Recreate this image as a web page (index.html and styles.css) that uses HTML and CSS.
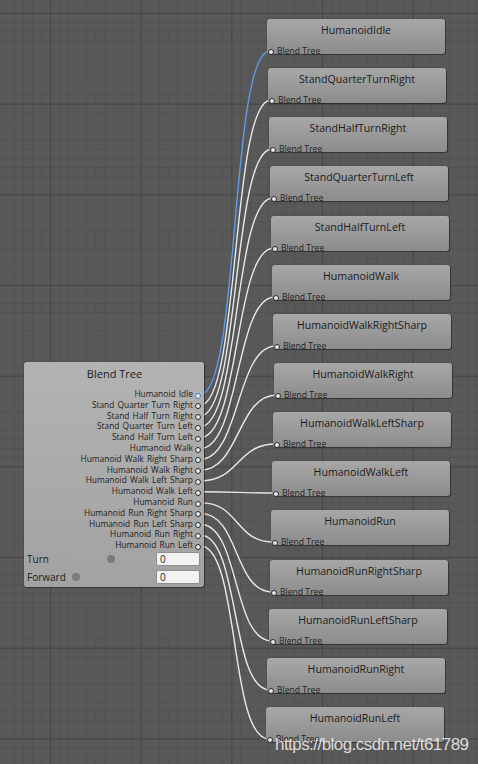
FILE: index.html
```html
<!DOCTYPE html>
<html lang="en">
<head>
<meta charset="utf-8">
<title>Blend Tree</title>
<link rel="stylesheet" href="styles.css">
</head>
<body>
<div class="canvas">
  <svg class="edges" width="478" height="764" viewBox="0 0 478 764">
    <g fill="none" stroke-width="1.4">
      <path class="edge" d="M200 545.8 C240 545.8 229 739 269 739"/>
      <path class="edge" d="M200 535.0 C240 535.0 230 690 270 690"/>
      <path class="edge" d="M200 524.2 C240 524.2 232 641 272 641"/>
      <path class="edge" d="M200 513.4 C240 513.4 233 592 273 592"/>
      <path class="edge" d="M200 502.6 C240 502.6 234 542 274 542"/>
      <path class="edge" d="M200 491.8 C240 491.8 235 493 275 493"/>
      <path class="edge" d="M200 481.0 C240 481.0 236 444 276 444"/>
      <path class="edge" d="M200 470.2 C240 470.2 237 395 277 395"/>
      <path class="edge" d="M200 459.4 C240 459.4 236 346 276 346"/>
      <path class="edge" d="M200 448.6 C240 448.6 235 297 275 297"/>
      <path class="edge" d="M200 437.7 C240 437.7 234 248 274 248"/>
      <path class="edge" d="M200 426.9 C240 426.9 233 198 273 198"/>
      <path class="edge" d="M200 416.1 C240 416.1 232 149 272 149"/>
      <path class="edge" d="M200 405.3 C240 405.3 231 100 271 100"/>
      <path class="edge active" d="M200 394.5 C240 394.5 230 51 270 51"/>
    </g>
  </svg>

  <div class="node blend">
    <div class="blend-title">Blend Tree</div>
    <ul class="outputs">
      <li class="active">Humanoid Idle</li>
      <li>Stand Quarter Turn Right</li>
      <li>Stand Half Turn Right</li>
      <li>Stand Quarter Turn Left</li>
      <li>Stand Half Turn Left</li>
      <li>Humanoid Walk</li>
      <li>Humanoid Walk Right Sharp</li>
      <li>Humanoid Walk Right</li>
      <li>Humanoid Walk Left Sharp</li>
      <li>Humanoid Walk Left</li>
      <li>Humanoid Run</li>
      <li>Humanoid Run Right Sharp</li>
      <li>Humanoid Run Left Sharp</li>
      <li>Humanoid Run Right</li>
      <li>Humanoid Run Left</li>
    </ul>
    <div class="param">
      <span class="param-name">Turn</span>
      <span class="slider"><span class="knob"></span></span>
      <span class="field">0</span>
    </div>
    <div class="param">
      <span class="param-name">Forward</span>
      <span class="slider short"><span class="knob start"></span></span>
      <span class="field">0</span>
    </div>
  </div>

  <div class="node clip" style="left:267px;top:19px"><div class="clip-title">HumanoidIdle</div><div class="clip-input">Blend Tree</div></div>
  <div class="node clip" style="left:268px;top:68px"><div class="clip-title">StandQuarterTurnRight</div><div class="clip-input">Blend Tree</div></div>
  <div class="node clip" style="left:269px;top:117px"><div class="clip-title">StandHalfTurnRight</div><div class="clip-input">Blend Tree</div></div>
  <div class="node clip" style="left:270px;top:166px"><div class="clip-title">StandQuarterTurnLeft</div><div class="clip-input">Blend Tree</div></div>
  <div class="node clip" style="left:271px;top:216px"><div class="clip-title">StandHalfTurnLeft</div><div class="clip-input">Blend Tree</div></div>
  <div class="node clip" style="left:272px;top:265px"><div class="clip-title">HumanoidWalk</div><div class="clip-input">Blend Tree</div></div>
  <div class="node clip" style="left:273px;top:314px"><div class="clip-title">HumanoidWalkRightSharp</div><div class="clip-input">Blend Tree</div></div>
  <div class="node clip" style="left:274px;top:363px"><div class="clip-title">HumanoidWalkRight</div><div class="clip-input">Blend Tree</div></div>
  <div class="node clip" style="left:273px;top:412px"><div class="clip-title">HumanoidWalkLeftSharp</div><div class="clip-input">Blend Tree</div></div>
  <div class="node clip" style="left:272px;top:461px"><div class="clip-title">HumanoidWalkLeft</div><div class="clip-input">Blend Tree</div></div>
  <div class="node clip" style="left:271px;top:510px"><div class="clip-title">HumanoidRun</div><div class="clip-input">Blend Tree</div></div>
  <div class="node clip" style="left:270px;top:560px"><div class="clip-title">HumanoidRunRightSharp</div><div class="clip-input">Blend Tree</div></div>
  <div class="node clip" style="left:269px;top:609px"><div class="clip-title">HumanoidRunLeftSharp</div><div class="clip-input">Blend Tree</div></div>
  <div class="node clip" style="left:267px;top:658px"><div class="clip-title">HumanoidRunRight</div><div class="clip-input">Blend Tree</div></div>
  <div class="node clip" style="left:266px;top:707px"><div class="clip-title">HumanoidRunLeft</div><div class="clip-input">Blend Tree</div></div>

  <div class="watermark">https://blog.csdn.net/t61789</div>
</div>
</body>
</html>
```

FILE: styles.css
```css
* { box-sizing: border-box; }

html, body {
  margin: 0;
  padding: 0;
  background: #595959;
}

.canvas {
  position: relative;
  width: 478px;
  height: 764px;
  overflow: hidden;
  font-family: "Open Sans", "Noto Sans", sans-serif;
  color: #1c1c1c;
  background-color: #595959;
  background-image:
    linear-gradient(to right, #454545 1px, transparent 1px),
    linear-gradient(to bottom, #454545 1px, transparent 1px),
    linear-gradient(to right, #525252 1px, transparent 1px),
    linear-gradient(to bottom, #525252 1px, transparent 1px);
  background-size: 90.7px 90.7px, 90.7px 90.7px, 9.07px 9.07px, 9.07px 9.07px;
  background-position: 50px 13px, 50px 13px, 50px 13px, 50px 13px;
}

/* connection curves */
.edges {
  position: absolute;
  left: 0;
  top: 0;
}
.edge { stroke: #e8e8e8; }
.edge.active { stroke: #5d9ce6; }

/* shared node look */
.node {
  position: absolute;
  border-radius: 3px;
  box-shadow: 1px 1px 0 rgba(0, 0, 0, 0.35), 0 0 2px rgba(0, 0, 0, 0.25);
}

/* blend tree node */
.blend {
  left: 24px;
  top: 362px;
  width: 180px;
  height: 225px;
  background: linear-gradient(#b3b3b3, #a2a2a2);
  padding-top: 5px;
}

.blend-title {
  text-align: center;
  font-size: 11px;
  line-height: 14px;
  height: 22px;
  padding-left: 1px;
}

.outputs {
  list-style: none;
  margin: 0;
  padding: 0;
}

.outputs li {
  height: 10.81px;
  line-height: 10.81px;
  font-size: 8.4px;
  text-align: right;
  padding-right: 11px;
  position: relative;
  word-spacing: 1px;
  white-space: nowrap;
}

.outputs li::after {
  content: "";
  position: absolute;
  right: 3px;
  top: 3.7px;
  width: 4px;
  height: 4px;
  border-radius: 50%;
  border: 1px solid #2a2a2a;
  background: #e8e8e8;
}
.outputs li.active::after {
  border-color: #3f78c2;
}

.param {
  display: flex;
  align-items: center;
  height: 18px;
  padding-left: 3px;
  padding-right: 4px;
}
.outputs + .param { margin-top: -1px; }

.param-name {
  font-size: 10px;
  flex: none;
}

.slider {
  flex: 1;
  position: relative;
  height: 8px;
  margin: 0 4px 0 21px;
}
.slider::before {
  content: "";
  position: absolute;
  left: 0;
  right: 0;
  top: 3.5px;
  height: 1px;
  background: #a9a9a9;
}
.slider.short::before { display: none; }
.slider.short { margin-left: 6px; }

.knob {
  position: absolute;
  left: 37px;
  top: 0;
  width: 8px;
  height: 8px;
  border-radius: 50%;
  background: #7b7b7b;
}
.knob.start { left: 0; }

.field {
  flex: none;
  width: 44px;
  height: 14px;
  background: #f2f2f2;
  border: 1px solid #8f8f8f;
  border-radius: 2px;
  font-size: 10px;
  line-height: 12px;
  padding-left: 3px;
}

/* animation clip nodes */
.clip {
  width: 178px;
  height: 35px;
  background: linear-gradient(#a7a7a7, #8c8c8c);
}

.clip-title {
  text-align: center;
  font-size: 10.6px;
  line-height: 14px;
  padding-top: 4px;
  height: 27px;
}

.clip-input {
  position: relative;
  font-size: 8.6px;
  line-height: 10px;
  padding-left: 10px;
  color: #222;
}
.clip-input::before {
  content: "";
  position: absolute;
  left: 1px;
  top: 3px;
  width: 4px;
  height: 4px;
  border-radius: 50%;
  border: 1px solid #2a2a2a;
  background: #e8e8e8;
}

.watermark {
  position: absolute;
  left: 275px;
  top: 735px;
  font-family: "Liberation Sans", Arial, sans-serif;
  font-size: 17px;
  line-height: 20px;
  color: rgba(255, 255, 255, 0.8);
  letter-spacing: -0.55px;
  white-space: nowrap;
}
```
